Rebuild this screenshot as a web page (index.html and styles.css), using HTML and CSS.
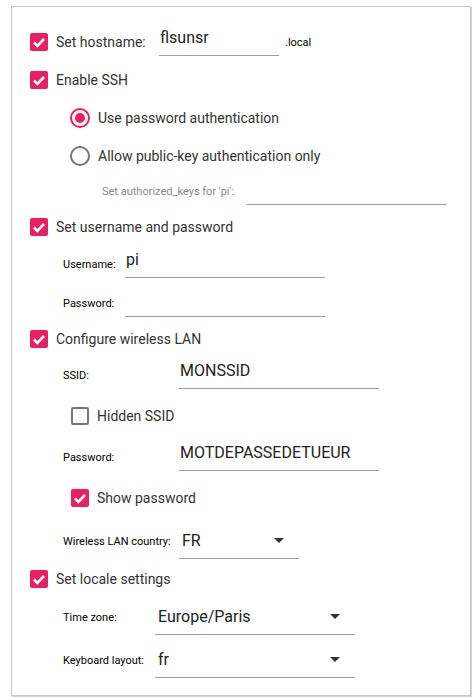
FILE: index.html
```html
<!DOCTYPE html>
<html lang="en">
<head>
  <meta charset="UTF-8" />
  <title>Advanced options</title>
  <link rel="stylesheet" href="styles.css">
</head>
<body>
  <div class="panel">

    <div class="row first">
      <div class="check host-check"><span class="box on"><svg viewBox="0 0 18 18"><path d="M4 9.5l3.3 3.3L14 6"/></svg></span>Set hostname:</div>
      <input class="field host" type="text" value="flsunsr">
      <span class="suffix">.local</span>
    </div>

    <div class="row gap-m">
      <div class="check"><span class="box on"><svg viewBox="0 0 18 18"><path d="M4 9.5l3.3 3.3L14 6"/></svg></span>Enable SSH</div>
    </div>

    <div class="row radio-row gap-xl">
      <span class="radio on"></span>Use password authentication
    </div>
    <div class="row radio-row gap-l">
      <span class="radio"></span>Allow public-key authentication only
    </div>
    <div class="row keys gap-s">
      <span class="hint">Set authorized_keys for 'pi':</span>
      <input class="field keys-field" type="text" value="">
    </div>

    <div class="row">
      <div class="check"><span class="box on"><svg viewBox="0 0 18 18"><path d="M4 9.5l3.3 3.3L14 6"/></svg></span>Set username and password</div>
    </div>
    <div class="row sub gap-ms">
      <span class="lbl user-lbl">Username:</span>
      <input class="field user-field" type="text" value="pi">
    </div>
    <div class="row sub gap-s">
      <span class="lbl user-lbl">Password:</span>
      <input class="field user-field" type="text" value="">
    </div>

    <div class="row">
      <div class="check"><span class="box on"><svg viewBox="0 0 18 18"><path d="M4 9.5l3.3 3.3L14 6"/></svg></span>Configure wireless LAN</div>
    </div>
    <div class="row sub">
      <span class="lbl wifi-lbl">SSID:</span>
      <input class="field user-field" type="text" value="MONSSID">
    </div>
    <div class="row subcheck gap-l">
      <div class="check"><span class="box"></span>Hidden SSID</div>
    </div>
    <div class="row sub gap-l">
      <span class="lbl wifi-lbl">Password:</span>
      <input class="field user-field" type="text" value="MOTDEPASSEDETUEUR">
    </div>
    <div class="row subcheck gap-l">
      <div class="check"><span class="box on"><svg viewBox="0 0 18 18"><path d="M4 9.5l3.3 3.3L14 6"/></svg></span>Show password</div>
    </div>
    <div class="row sub gap-ml">
      <span class="lbl wifi-lbl">Wireless LAN country:</span>
      <div class="select country"><span>FR</span><svg viewBox="0 0 10 5"><path d="M0 0H10L5 5Z"/></svg></div>
    </div>

    <div class="row gap-s">
      <div class="check"><span class="box on"><svg viewBox="0 0 18 18"><path d="M4 9.5l3.3 3.3L14 6"/></svg></span>Set locale settings</div>
    </div>
    <div class="row sub gap-s">
      <span class="lbl locale-lbl">Time zone:</span>
      <div class="select locale"><span>Europe/Paris</span><svg viewBox="0 0 10 5"><path d="M0 0H10L5 5Z"/></svg></div>
    </div>
    <div class="row sub gap-xs">
      <span class="lbl locale-lbl">Keyboard layout:</span>
      <div class="select locale"><span>fr</span><svg viewBox="0 0 10 5"><path d="M0 0H10L5 5Z"/></svg></div>
    </div>

  </div>
</body>
</html>
```

FILE: styles.css
```css
body {
  margin: 0;
  background: #fff;
  font-family: Roboto, "Liberation Sans", sans-serif;
  color: #333;
}

.panel {
  margin: 6px 1px 2px 11px;
  border: 1px solid #c6c6c6;
  box-shadow: 1px 1px 0 #d4d4d4;
  padding: 21px 18px 17px 18px;
}

.row {
  display: flex;
  align-items: center;
  margin-top: 13px;
  font-size: 14px;
}

.row.first { margin-top: 0; }
.row.gap-xs { margin-top: 7px; }
.row.gap-s { margin-top: 11px; }
.row.gap-ms { margin-top: 14px; }
.row.gap-m { margin-top: 15px; }
.row.gap-ml { margin-top: 16px; }
.row.gap-l { margin-top: 18px; }
.row.gap-xl { margin-top: 19px; }

.check {
  display: flex;
  align-items: center;
  gap: 8px;
  height: 18px;
}

.host-check {
  width: 129px;
}

.box {
  width: 18px;
  height: 18px;
  box-sizing: border-box;
  border: 2px solid #757575;
  border-radius: 2px;
  flex: none;
}

.box.on {
  background: #e91e63;
  border-color: #e91e63;
}

.box svg {
  display: block;
  width: 18px;
  height: 18px;
  margin: -2px;
}

.box svg path {
  fill: none;
  stroke: #fff;
  stroke-width: 2.6;
}

.field {
  border: none;
  border-bottom: 1px solid #9e9e9e;
  height: 28px;
  box-sizing: border-box;
  padding: 0 1px 8px;
  margin: 0;
  font-family: Roboto, "Liberation Sans", sans-serif;
  font-size: 16px;
  color: #222;
  outline: none;
  background: transparent;
}

.host {
  width: 120px;
}

.suffix {
  font-size: 11px;
  color: #000;
  margin-left: 6px;
}

.radio-row {
  padding-left: 40px;
  height: 20px;
}

.radio {
  width: 20px;
  height: 20px;
  box-sizing: border-box;
  border: 2px solid #757575;
  border-radius: 50%;
  margin-right: 8px;
  flex: none;
  display: flex;
  align-items: center;
  justify-content: center;
}

.radio.on {
  border-color: #e91e63;
}

.radio.on::after {
  content: "";
  width: 10px;
  height: 10px;
  border-radius: 50%;
  background: #e91e63;
}

.keys {
  padding-left: 72px;
}

.hint {
  font-size: 11px;
  color: #8a8a8a;
  width: 145px;
}

.keys-field {
  width: 200px;
}

.sub {
  padding-left: 33px;
}

.subcheck {
  padding-left: 41px;
}

.lbl {
  font-size: 11px;
  color: #000;
  flex: none;
}

.user-lbl { width: 62px; }
.wifi-lbl { width: 116px; }
.locale-lbl { width: 92px; }

.user-field {
  width: 200px;
}

.select {
  display: flex;
  align-items: center;
  justify-content: space-between;
  height: 36px;
  box-sizing: border-box;
  border-bottom: 1px solid #9e9e9e;
  padding: 0 15px 0 3px;
  font-size: 16px;
  color: #222;
}

.select svg {
  width: 10px;
  height: 5px;
  fill: #333;
}

.country { width: 120px; }
.locale { width: 200px; }
```
